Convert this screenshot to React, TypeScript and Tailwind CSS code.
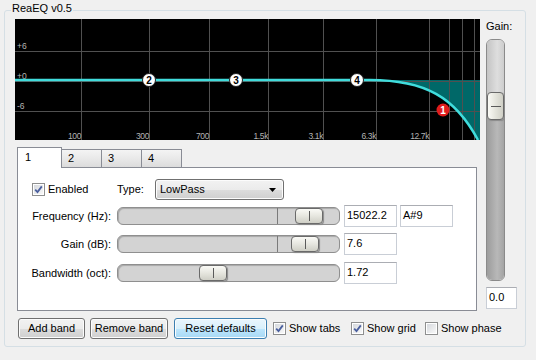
import React from 'react';

const FONT = "font-['Liberation_Sans',Arial,sans-serif]";

const V_LINES = [66, 134, 194, 253, 308, 361, 414, 434, 447, 459];
const FREQ_LABELS: [number, string][] = [
  [66, '100'],
  [134, '300'],
  [194, '700'],
  [253, '1.5k'],
  [308, '3.1k'],
  [361, '6.3k'],
  [414, '12.7k'],
];
const NODES: [number, string][] = [
  [134, '2'],
  [221, '3'],
  [342, '4'],
];

function Graph() {
  return (
    <svg width="465" height="121" className="block bg-black">
      {/* band effect fill */}
      <path d="M355 61 C410 61 440 78 463 121 H465 V61 Z" fill="#006868" />
      {/* grid */}
      {[32.5, 62.5, 92.5].map((y) => (
        <line key={y} x1="0" x2="465" y1={y} y2={y} stroke="#505050" strokeWidth="1" />
      ))}
      {V_LINES.map((x) => (
        <line key={x} x1={x + 0.5} x2={x + 0.5} y1="0" y2="121" stroke="#505050" strokeWidth="1" />
      ))}
      {/* gain labels */}
      <g fill="#b4b4b4" fontSize="8.5" fontFamily="'Liberation Sans', Arial, sans-serif">
        <text x="2" y="30">+6</text>
        <text x="2" y="60">+0</text>
        <text x="2" y="90">-6</text>
        {FREQ_LABELS.map(([x, t]) => (
          <text key={t} x={x} y="120" textAnchor="end" letterSpacing="-0.4">
            {t}
          </text>
        ))}
      </g>
      {/* response curve */}
      <path d="M0 61 H355 C410 61 440 78 463 121" fill="none" stroke="#40dcdc" strokeWidth="2.5" />
      {/* band nodes */}
      {NODES.map(([x, t]) => (
        <g key={t}>
          <circle cx={x} cy="61" r="6.5" fill="#fff" stroke="#222" strokeWidth="1" />
          <text
            x={x}
            y="64.5"
            textAnchor="middle"
            fontSize="10"
            fontWeight="bold"
            fill="#000"
            fontFamily="'Liberation Sans', Arial, sans-serif"
          >
            {t}
          </text>
        </g>
      ))}
      <circle cx="428" cy="91" r="6.5" fill="#e01c1c" />
      <text
        x="428"
        y="94.5"
        textAnchor="middle"
        fontSize="10"
        fontWeight="bold"
        fill="#fff"
        fontFamily="'Liberation Sans', Arial, sans-serif"
      >
        1
      </text>
    </svg>
  );
}

function CheckBox({ checked }: { checked: boolean }) {
  return (
    <div className="w-[13px] h-[13px] shrink-0 border border-[#8e8f8f] bg-white p-[1px]">
      <div className="w-full h-full bg-linear-to-br from-[#d6d9de] to-[#f8f8f8] flex items-center justify-center">
        {checked && (
          <svg width="9" height="9" viewBox="0 0 9 9">
            <path d="M1.2 4.6 L3.5 7 L7.8 1.4" fill="none" stroke="#4a5f9e" strokeWidth="1.8" />
          </svg>
        )}
      </div>
    </div>
  );
}

function Slider({ thumb, mark }: { thumb: string; mark: boolean }) {
  return (
    <div className="relative w-[223px] h-[18px] rounded-[6px] border border-[#8f8f8f] bg-[#d3d3d3] shadow-[inset_1px_1px_1px_#a8a8a8]">
      {mark && <div className="absolute left-[159px] top-0 bottom-0 w-px bg-[#7a7a7a]" />}
      <div
        className={`absolute ${thumb} top-[0px] w-[28px] h-[16px] rounded-[4px] border border-[#6a6a6a] bg-[linear-gradient(#fafaf6,#e6e6df_50%,#cfcfc6)] shadow-[1px_1px_1px_#8a8a8a] flex justify-center`}
      >
        <div className="w-px h-[10px] bg-[#5a5a5a] self-center" />
      </div>
    </div>
  );
}

function TextBox({ value, w = 'w-[53px]' }: { value: string; w?: string }) {
  return (
    <div
      className={`${w} h-[22px] border border-[#c9ced6] border-t-[#abadb3] bg-white px-[2px] leading-[19px]`}
    >
      {value}
    </div>
  );
}

function Button({ label, w, active }: { label: string; w: string; active?: boolean }) {
  return (
    <div
      className={`${w} h-[21px] shrink-0 rounded-[3px] border flex items-center justify-center whitespace-nowrap shadow-[inset_0_0_0_1px_#fcfcfc] ${
        active
          ? 'border-[#3c7fb1] bg-[linear-gradient(#eaf6fd,#d9f0fc_50%,#bee6fd_50%,#a7d9f5)]'
          : 'border-[#707070] bg-[linear-gradient(#f2f2f2,#ebebeb_50%,#dddddd_50%,#cfcfcf)]'
      }`}
    >
      {label}
    </div>
  );
}

export default function App() {
  return (
    <div className={`w-[536px] h-[360px] bg-[#f0f0f0] pt-[10px] pl-[4px] overflow-hidden text-[11px] text-black ${FONT}`}>
      <div className="relative w-[522px] h-[337px] border border-[#d5dfe5] rounded-[3px]">
        <span className="absolute left-[6px] top-[-9px] px-[1px] bg-[#f0f0f0] leading-[13px]">
          ReaEQ v0.5
        </span>

        <div className="flex gap-[6px] pl-[10px] pt-[8px]">
          {/* left column */}
          <div className="w-[465px] shrink-0 flex flex-col">
            <Graph />

            {/* tabs */}
            <div className="ml-[2px] mt-[7px] flex items-end h-[20px]">
              <div className="relative z-10 w-[45px] h-[21px] -mb-[1px] border border-b-0 border-[#898c95] bg-white pl-[7px] pt-[3px] leading-[13px]">
                1
              </div>
              {['2', '3', '4'].map((t) => (
                <div
                  key={t}
                  className="w-[41px] h-[18px] -ml-px first:ml-0 border border-b-0 border-[#898c95] bg-[linear-gradient(#f4f4f4,#e9e9e9_50%,#dcdcdc)] pl-[6px] leading-[16px]"
                >
                  {t}
                </div>
              ))}
            </div>

            {/* band panel */}
            <div className="ml-[2px] w-[460px] h-[144px] border border-[#898c95] bg-white flex flex-col">
              <div className="mt-[11px] h-[21px] flex items-center">
                <div className="ml-[14px]">
                  <CheckBox checked />
                </div>
                <span className="ml-[3px] w-[69px]">Enabled</span>
                <span className="w-[38px]">Type:</span>
                <div className="w-[129px] h-[21px] rounded-[3px] border border-[#707070] bg-[linear-gradient(#f2f2f2,#ebebeb_50%,#dddddd_50%,#cfcfcf)] shadow-[inset_0_0_0_1px_#fcfcfc] flex items-center pl-[4px] pr-[7px]">
                  <span className="flex-1">LowPass</span>
                  <svg width="7" height="4" viewBox="0 0 7 4">
                    <path d="M0 0 H7 L3.5 4 Z" fill="#000" />
                  </svg>
                </div>
              </div>

              <div className="mt-[5px] h-[22px] flex items-center">
                <span className="w-[93px] text-right">Frequency (Hz):</span>
                <div className="ml-[6px]">
                  <Slider thumb="left-[177px]" mark />
                </div>
                <div className="ml-[4px]">
                  <TextBox value="15022.2" />
                </div>
                <div className="ml-[3px]">
                  <TextBox value="A#9" />
                </div>
              </div>

              <div className="mt-[6px] h-[22px] flex items-center">
                <span className="w-[93px] text-right">Gain (dB):</span>
                <div className="ml-[6px]">
                  <Slider thumb="left-[173px]" mark />
                </div>
                <div className="ml-[4px]">
                  <TextBox value="7.6" />
                </div>
              </div>

              <div className="mt-[7px] h-[22px] flex items-center">
                <span className="w-[93px] text-right">Bandwidth (oct):</span>
                <div className="ml-[6px]">
                  <Slider thumb="left-[81px]" mark={false} />
                </div>
                <div className="ml-[4px]">
                  <TextBox value="1.72" />
                </div>
              </div>
            </div>

            {/* bottom buttons */}
            <div className="ml-[3px] mt-[7px] h-[21px] flex items-center whitespace-nowrap">
              <Button label="Add band" w="w-[67px]" />
              <div className="ml-[5px] shrink-0">
                <Button label="Remove band" w="w-[78px]" />
              </div>
              <div className="ml-[6px] shrink-0">
                <Button label="Reset defaults" w="w-[93px]" active />
              </div>
              <div className="ml-[6px] w-[78px] shrink-0 flex items-center gap-[3px]">
                <CheckBox checked />
                <span>Show tabs</span>
              </div>
              <div className="w-[74px] shrink-0 flex items-center gap-[3px]">
                <CheckBox checked />
                <span>Show grid</span>
              </div>
              <div className="shrink-0 flex items-center gap-[3px]">
                <CheckBox checked={false} />
                <span>Show phase</span>
              </div>
            </div>
          </div>

          {/* gain column */}
          <div className="w-[32px] flex flex-col">
            <span className="mt-[1px] leading-[13px]">Gain:</span>
            <div className="relative mt-[6px] w-[19px] h-[242px] rounded-[6px] border border-[#8a8a8a] overflow-hidden flex flex-col">
              <div className="h-[67px] bg-[linear-gradient(90deg,#c4c4c4,#dedede_60%,#cdcdcd)]" />
              <div className="flex-1 bg-[linear-gradient(90deg,#9c9c9c,#b8b8b8_60%,#a4a4a4)]" />
              <div className="absolute left-0 top-[52px] w-[17px] h-[28px] rounded-[4px] border border-[#6a6a6a] bg-[linear-gradient(90deg,#fafaf6,#e4e4dc_50%,#cfcfc6)] shadow-[1px_1px_1px_#8a8a8a] flex items-center justify-center">
                <div className="w-[10px] h-px bg-[#5a5a5a]" />
              </div>
            </div>
            <div className="mt-[6px]">
              <TextBox value="0.0" w="w-[31px]" />
            </div>
          </div>
        </div>
      </div>
    </div>
  );
}
